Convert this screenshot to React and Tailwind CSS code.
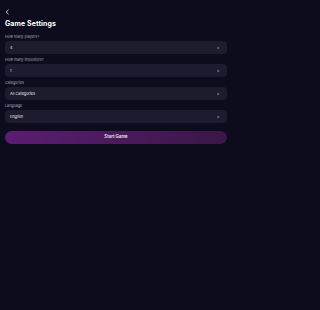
import React from 'react';

const fields = [
  { label: 'How many players?', value: '4' },
  { label: 'How many impostors?', value: '1' },
  { label: 'Categories', value: 'All Categories' },
  { label: 'Language', value: 'English' },
];

const App = () => {
  return (
    <div className="min-h-screen w-full bg-[#0c0c1d]">
      <div
        className="w-[232px] px-[5px] pt-[8px] text-white"
        style={{ fontFamily: 'Inter, "Liberation Sans", sans-serif' }}
      >
        <button className="flex h-[7px] w-[7px] items-center text-[#d6d6de]">
          <svg width="5" height="6" viewBox="0 0 5 6" fill="none">
            <path d="M3.5 0.8 L1.2 3 L3.5 5.2" stroke="currentColor" strokeWidth="1" />
          </svg>
        </button>

        <h1 className="mt-[3px] text-[7px] font-bold leading-[12px] tracking-[0.1px]">
          Game Settings
        </h1>

        <div className="mt-[4px] flex flex-col gap-[3px]">
          {fields.map((f) => (
            <div key={f.label} className="flex flex-col gap-[2px]">
              <p className="text-[3.7px] leading-[5px] text-[#a4a4b4]">{f.label}</p>
              <div className="flex h-[13px] items-center justify-between rounded-[4px] bg-[#1c1c2e] pl-[5px] pr-[7px]">
                <span className="text-[3.8px] text-[#e4e4ec]">{f.value}</span>
                <svg width="3" height="4" viewBox="0 0 3 4" className="text-[#7a7a8a]">
                  <path d="M0.5 0.5 L2.5 2 L0.5 3.5 Z" fill="currentColor" />
                </svg>
              </div>
            </div>
          ))}
        </div>

        <button className="mt-[8px] flex h-[13px] w-full items-center justify-center rounded-full bg-gradient-to-r from-[#5c1c72] to-[#3a1748] text-[4.3px] font-semibold text-[#ececf2]">
          Start Game
        </button>
      </div>
    </div>
  );
};

export default App;
